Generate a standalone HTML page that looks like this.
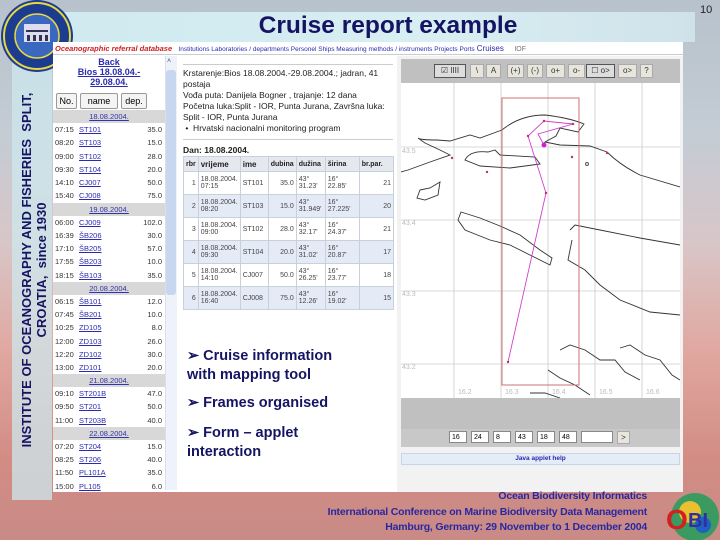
<!DOCTYPE html>
<html><head><meta charset="utf-8"><style>
*{margin:0;padding:0;box-sizing:border-box}
body{width:720px;height:540px;overflow:hidden;position:relative;font-family:"Liberation Sans",sans-serif;
background:linear-gradient(180deg,#b7c2cc 0%,#c4ccd4 25%,#d8c6c8 45%,#e0a8a0 65%,#d28c84 85%,#c98a86 100%)}
.a{position:absolute}
#list div{position:absolute;left:0;width:112px;height:13px;font-size:7.5px;color:#333;line-height:13px}
#list .d{background:#d8d8d8;text-align:center}
#list .d span{color:#33a;text-decoration:underline}
#list .r span.t{position:absolute;left:2px}
#list .r span.s{position:absolute;left:26px;color:#2b2bb0;text-decoration:underline}
#list .r span.v{position:absolute;right:3px}
table{border-collapse:collapse;font-size:7px;color:#444}
td,th{border:1px solid #c8d0dc;padding:0 2px;height:23px}
th{height:15px;background:#e6e8ef;font-size:8px;color:#222;text-align:left}
tr.b td{background:#e4ebf7}
.btn{position:absolute;top:5px;height:14px;background:#e8e6dc;border:1px solid #aaa;font-size:8px;text-align:center;line-height:12px;color:#333}
.inp{position:absolute;top:2px;height:12px;background:#fff;border:1px solid #888;font-size:7px;padding-left:2px;line-height:11px}
</style></head><body>
<div class="a" style="left:60px;top:12px;width:635px;height:30px;background:linear-gradient(90deg,#cfeaf0,#d8eef2 60%,#cfe2ea)"></div>
<div class="a" style="left:12px;top:40px;width:40px;height:460px;background:rgba(205,232,238,0.75)"></div>
<div class="a" style="left:73px;top:12px;width:630px;text-align:center;font-size:24.5px;font-weight:bold;color:#141463">Cruise report example</div>
<div class="a" style="left:700px;top:4px;font-size:11px;color:#222">10</div>
<svg class="a" style="left:0;top:0" width="76" height="76"><circle cx="37" cy="36" r="36" fill="#1c3c90"/><circle cx="37" cy="36" r="33" fill="none" stroke="#e8d840" stroke-width="2"/><circle cx="37" cy="36" r="22" fill="#3a68c0" stroke="#e8d840" stroke-width="1.5"/><rect x="24" y="24" width="26" height="18" fill="#dde"/><rect x="26" y="30" width="22" height="2" fill="#335"/><rect x="27" y="35" width="3" height="6" fill="#335"/><rect x="33" y="35" width="3" height="6" fill="#335"/><rect x="39" y="35" width="3" height="6" fill="#335"/><rect x="45" y="35" width="3" height="6" fill="#335"/></svg>
<div class="a" style="left:19px;top:490px;width:440px;height:40px;transform-origin:0 0;transform:rotate(-90deg);font-size:13px;font-weight:bold;color:#141463;line-height:15px;text-align:center;white-space:nowrap">INSTITUTE OF OCEANOGRAPHY AND FISHERIES&nbsp; SPLIT,<br>CROATIA,&nbsp; since 1930</div>

<div class="a" style="left:53px;top:42px;width:630px;height:450px;background:#fff"></div>
<div class="a" style="left:55px;top:44px;font-size:7.5px;white-space:nowrap"><i style="color:#d02020;font-weight:bold;">Oceanographic referral database</i> &nbsp; <span style="color:#2b2bb0;font-size:6.5px">Institutions Laboratories / departments Personel Ships Measuring methods / instruments Projects Ports</span> <span style="color:#2b2bb0;font-size:8px">Cruises</span> &nbsp; &nbsp; <span style="color:#776;font-size:7px">IOF</span></div>
<div class="a" style="left:53px;top:54px;width:630px;height:1px;background:#ccc"></div>
<div class="a" style="left:55px;top:57px;width:108px;text-align:center;font-size:9px;font-weight:bold;color:#2b2bb0;line-height:10px;text-decoration:underline">Back<br>Bios 18.08.04.-<br>29.08.04.</div>
<div class="a" style="left:56px;top:93px;width:21px;height:16px;border:1px solid #999;border-radius:2px;font-size:9px;text-align:center;line-height:14px;background:#f4f4f4">No.</div>
<div class="a" style="left:80px;top:93px;width:38px;height:16px;border:1px solid #999;border-radius:2px;font-size:9px;text-align:center;line-height:14px;background:#f4f4f4">name</div>
<div class="a" style="left:121px;top:93px;width:26px;height:16px;border:1px solid #999;border-radius:2px;font-size:9px;text-align:center;line-height:14px;background:#f4f4f4">dep.</div>
<div id="list" class="a" style="left:53px;top:110px;width:112px;height:382px;">
<div class="d" style="top:0"><span>18.08.2004.</span></div>
<div class="r" style="top:13px"><span class="t">07:15</span><span class="s">ST101</span><span class="v">35.0</span></div>
<div class="r" style="top:26px"><span class="t">08:20</span><span class="s">ST103</span><span class="v">15.0</span></div>
<div class="r" style="top:40px"><span class="t">09:00</span><span class="s">ST102</span><span class="v">28.0</span></div>
<div class="r" style="top:53px"><span class="t">09:30</span><span class="s">ST104</span><span class="v">20.0</span></div>
<div class="r" style="top:66px"><span class="t">14:10</span><span class="s">CJ007</span><span class="v">50.0</span></div>
<div class="r" style="top:79px"><span class="t">15:40</span><span class="s">CJ008</span><span class="v">75.0</span></div>
<div class="d" style="top:93px"><span>19.08.2004.</span></div>
<div class="r" style="top:106px"><span class="t">06:00</span><span class="s">CJ009</span><span class="v">102.0</span></div>
<div class="r" style="top:119px"><span class="t">16:39</span><span class="s">ŠB206</span><span class="v">30.0</span></div>
<div class="r" style="top:132px"><span class="t">17:10</span><span class="s">ŠB205</span><span class="v">57.0</span></div>
<div class="r" style="top:145px"><span class="t">17:55</span><span class="s">ŠB203</span><span class="v">10.0</span></div>
<div class="r" style="top:159px"><span class="t">18:15</span><span class="s">ŠB103</span><span class="v">35.0</span></div>
<div class="d" style="top:172px"><span>20.08.2004.</span></div>
<div class="r" style="top:185px"><span class="t">06:15</span><span class="s">ŠB101</span><span class="v">12.0</span></div>
<div class="r" style="top:198px"><span class="t">07:45</span><span class="s">ŠB201</span><span class="v">10.0</span></div>
<div class="r" style="top:211px"><span class="t">10:25</span><span class="s">ZD105</span><span class="v">8.0</span></div>
<div class="r" style="top:225px"><span class="t">12:00</span><span class="s">ZD103</span><span class="v">26.0</span></div>
<div class="r" style="top:238px"><span class="t">12:20</span><span class="s">ZD102</span><span class="v">30.0</span></div>
<div class="r" style="top:251px"><span class="t">13:00</span><span class="s">ZD101</span><span class="v">20.0</span></div>
<div class="d" style="top:264px"><span>21.08.2004.</span></div>
<div class="r" style="top:277px"><span class="t">09:10</span><span class="s">ST201B</span><span class="v">47.0</span></div>
<div class="r" style="top:290px"><span class="t">09:50</span><span class="s">ST201</span><span class="v">50.0</span></div>
<div class="r" style="top:304px"><span class="t">11:00</span><span class="s">ST203B</span><span class="v">40.0</span></div>
<div class="d" style="top:317px"><span>22.08.2004.</span></div>
<div class="r" style="top:330px"><span class="t">07:20</span><span class="s">ST204</span><span class="v">15.0</span></div>
<div class="r" style="top:343px"><span class="t">08:25</span><span class="s">ST206</span><span class="v">40.0</span></div>
<div class="r" style="top:356px"><span class="t">11:50</span><span class="s">PL101A</span><span class="v">35.0</span></div>
<div class="r" style="top:370px"><span class="t">15:00</span><span class="s">PL105</span><span class="v">6.0</span></div>
</div>
<div class="a" style="left:165px;top:56px;width:12px;height:434px;background:#eef2fa;border-left:1px solid #dde"></div>
<div class="a" style="left:166px;top:70px;width:10px;height:225px;background:#c8d6f0;border-radius:3px"></div>
<div class="a" style="left:167px;top:58px;font-size:7px;color:#446">˄</div>
<div class="a" style="left:183px;top:64px;width:210px;height:1px;background:#ccc"></div>
<div class="a" style="left:183px;top:68px;width:212px;font-size:8.5px;color:#222;line-height:11px">Krstarenje:Bios 18.08.2004.-29.08.2004.; jadran, 41 postaja<br>Vođa puta: Danijela Bogner , trajanje: 12 dana<br>Početna luka:Split - IOR, Punta Jurana, Završna luka: Split - IOR, Punta Jurana<br>&nbsp;•&nbsp; Hrvatski nacionalni monitoring program</div>
<div class="a" style="left:183px;top:139px;width:210px;height:1px;background:#ccc"></div>
<div class="a" style="left:183px;top:145px;font-size:8.5px;font-weight:bold;color:#222">Dan: 18.08.2004.</div>
<table class="a" style="left:183px;top:156px;width:211px">
<tr><th style="width:14px;font-size:7px">rbr</th><th style="width:35px">vrijeme</th><th style="width:28px">ime</th><th style="width:28px;font-size:7px">dubina</th><th style="width:29px;font-size:7px">dužina</th><th style="width:34px;font-size:7px">širina</th><th style="font-size:7px">br.par.</th></tr>
<tr><td style="text-align:right">1</td><td>18.08.2004.<br>07:15</td><td>ST101</td><td style="text-align:right">35.0</td><td>43°<br>31.23'</td><td>16°<br>22.85'</td><td style="text-align:right">21</td></tr>
<tr class="b"><td style="text-align:right">2</td><td>18.08.2004.<br>08:20</td><td>ST103</td><td style="text-align:right">15.0</td><td>43°<br>31.949'</td><td>16°<br>27.225'</td><td style="text-align:right">20</td></tr>
<tr><td style="text-align:right">3</td><td>18.08.2004.<br>09:00</td><td>ST102</td><td style="text-align:right">28.0</td><td>43°<br>32.17'</td><td>16°<br>24.37'</td><td style="text-align:right">21</td></tr>
<tr class="b"><td style="text-align:right">4</td><td>18.08.2004.<br>09:30</td><td>ST104</td><td style="text-align:right">20.0</td><td>43°<br>31.02'</td><td>16°<br>20.87'</td><td style="text-align:right">17</td></tr>
<tr><td style="text-align:right">5</td><td>18.08.2004.<br>14:10</td><td>CJ007</td><td style="text-align:right">50.0</td><td>43°<br>26.25'</td><td>16°<br>23.77'</td><td style="text-align:right">18</td></tr>
<tr class="b"><td style="text-align:right">6</td><td>18.08.2004.<br>16:40</td><td>CJ008</td><td style="text-align:right">75.0</td><td>43°<br>12.26'</td><td>16°<br>19.02'</td><td style="text-align:right">15</td></tr>
</table>
<div class="a" style="left:187px;top:347px;font-size:14.5px;font-weight:bold;color:#141463;line-height:19px">➢ Cruise information<br>with mapping tool</div>
<div class="a" style="left:187px;top:395px;font-size:14.5px;font-weight:bold;color:#141463">➢ Frames organised</div>
<div class="a" style="left:187px;top:424px;font-size:14.5px;font-weight:bold;color:#141463;line-height:19px">➢ Form – applet<br>interaction</div>
<div class="a" style="left:397px;top:56px;width:286px;height:436px;background:#f2f2f2"></div>
<div class="a" style="left:401px;top:59px;width:279px;height:384px;background:#c0c0c0"></div>
<div class="a" style="left:401px;top:59px;width:279px;height:24px">
<div class="btn" style="left:33px;width:32px;border:1px solid #555;background:#ddd">☑ IIII</div>
<div class="btn" style="left:69px;width:14px">\</div>
<div class="btn" style="left:85px;width:15px">A</div>
<div class="btn" style="left:106px;width:17px">(+)</div>
<div class="btn" style="left:126px;width:16px">(-)</div>
<div class="btn" style="left:145px;width:19px">o+</div>
<div class="btn" style="left:167px;width:17px">o-</div>
<div class="btn" style="left:185px;width:29px;border:1px solid #555;background:#ddd">☐ o&gt;</div>
<div class="btn" style="left:217px;width:19px">o&gt;</div>
<div class="btn" style="left:239px;width:13px">?</div>
</div>
<svg class="a" style="left:401px;top:83px" width="279" height="315" viewBox="401 83 279 315">
<rect x="401" y="83" width="279" height="315" fill="#fff"/>
<g stroke="#ccc" stroke-width="0.8"><line x1="454" y1="83" x2="454" y2="398"/><line x1="501" y1="83" x2="501" y2="398"/><line x1="548" y1="83" x2="548" y2="398"/><line x1="595" y1="83" x2="595" y2="398"/><line x1="642" y1="83" x2="642" y2="398"/>
<line x1="401" y1="147" x2="680" y2="147"/><line x1="401" y1="220" x2="680" y2="220"/><line x1="401" y1="291" x2="680" y2="291"/><line x1="401" y1="364" x2="680" y2="364"/></g>
<g fill="#bbb" font-size="7" font-family="Liberation Sans"><text x="402" y="153">43.5</text><text x="402" y="225">43.4</text><text x="402" y="296">43.3</text><text x="402" y="369">43.2</text><text x="458" y="394">16.2</text><text x="505" y="394">16.3</text><text x="552" y="394">16.4</text><text x="599" y="394">16.5</text><text x="646" y="394">16.6</text></g>
<g fill="none" stroke="#333" stroke-width="0.9">
<path d="M502 130 Q520 115 545 115 Q570 118 584 124 L578 132 L560 128 L556 136 L545 142 L560 145 L590 146 L607 152 Q620 165 640 175 L680 187"/>
<path d="M502 130 L480 138 L470 135 L450 141 L437 140 Q420 140 418 138 L425 143 L440 150 L450 155 L430 162 L408 170 L401 172"/>
<path d="M488 152 Q470 150 465 160 L480 166 L510 168 L540 164 L535 157 L500 155 L495 150 Z"/>
<path d="M420 190 L430 188 L440 182 L438 195 L425 200 L417 198 Z"/>
<path d="M461 212 L480 218 L500 226 L520 235 L540 250 L552 258 L550 265 L530 255 L510 245 L490 240 L465 230 L458 220 Z"/>
<path d="M570 230 L575 225 L600 230 L640 238 L680 245"/>
<path d="M572 240 L568 260 L585 270 L600 285 L620 300 L650 312 L680 315"/>
<path d="M560 350 L570 345 L585 350 L600 360 L615 360 L625 372 L640 380"/>
<path d="M620 348 L630 345 L645 355 L660 360 L672 375 L680 380"/>
<path d="M548 370 L560 378 L575 385 L590 395"/>
<path d="M530 393 L545 393 L560 398"/>
</g>
<rect x="502" y="98" width="77" height="287" fill="none" stroke="#d07070" stroke-width="1"/>
<polyline points="508,362 546,193 528,136 544,121 573,124 538,134 544,145" fill="none" stroke="#d040d0" stroke-width="0.9"/>
<circle cx="544" cy="145" r="2.5" fill="#d020d0"/>
<g fill="#c03060"><circle cx="452" cy="158" r="1.2"/><circle cx="487" cy="172" r="1.2"/><circle cx="572" cy="157" r="1.2"/><circle cx="607" cy="153" r="1.2"/><circle cx="508" cy="362" r="1.2"/><circle cx="546" cy="193" r="1.2"/><circle cx="528" cy="136" r="1.2"/><circle cx="544" cy="121" r="1.2"/><circle cx="573" cy="124" r="1.2"/></g>
<circle cx="587" cy="164" r="1.5" fill="none" stroke="#555"/>
</svg>
<div class="a" style="left:401px;top:429px;width:279px;height:18px;background:#c8c8c8">
<div class="inp" style="left:48px;width:18px">16</div><div class="inp" style="left:70px;width:18px">24</div><div class="inp" style="left:92px;width:18px">8</div><div class="inp" style="left:114px;width:18px">43</div><div class="inp" style="left:136px;width:18px">18</div><div class="inp" style="left:158px;width:18px">48</div><div class="inp" style="left:180px;width:32px"></div>
<div class="btn" style="left:216px;top:2px;width:13px;height:13px">&gt;</div>
</div>
<div class="a" style="left:401px;top:453px;width:279px;height:12px;background:#e4ecf8;border:1px solid #c8d4e8;font-size:6.5px;font-weight:bold;color:#2b2bb0;text-align:center;line-height:10px">Java applet help</div>
<div class="a" style="left:240px;top:489px;width:407px;text-align:right;font-size:10.5px;font-weight:bold;color:#2828a0;line-height:15.5px;letter-spacing:-0.2px">Ocean Biodiversity Informatics<br>International Conference on Marine Biodiversity Data Management<br>Hamburg, Germany: 29 November to 1 December 2004</div>
<svg class="a" style="left:648px;top:487px" width="72" height="53"><circle cx="47" cy="30" r="24" fill="#3a9a60"/><circle cx="42" cy="25" r="11" fill="#e8c030"/><circle cx="55" cy="38" r="8" fill="#2060c0"/><text x="18" y="42" font-size="28" font-weight="bold" fill="#d02020" font-family="Liberation Sans">O</text><text x="40" y="40" font-size="20" font-weight="bold" fill="#3030a0" font-family="Liberation Sans">BI</text></svg>
</body></html>
